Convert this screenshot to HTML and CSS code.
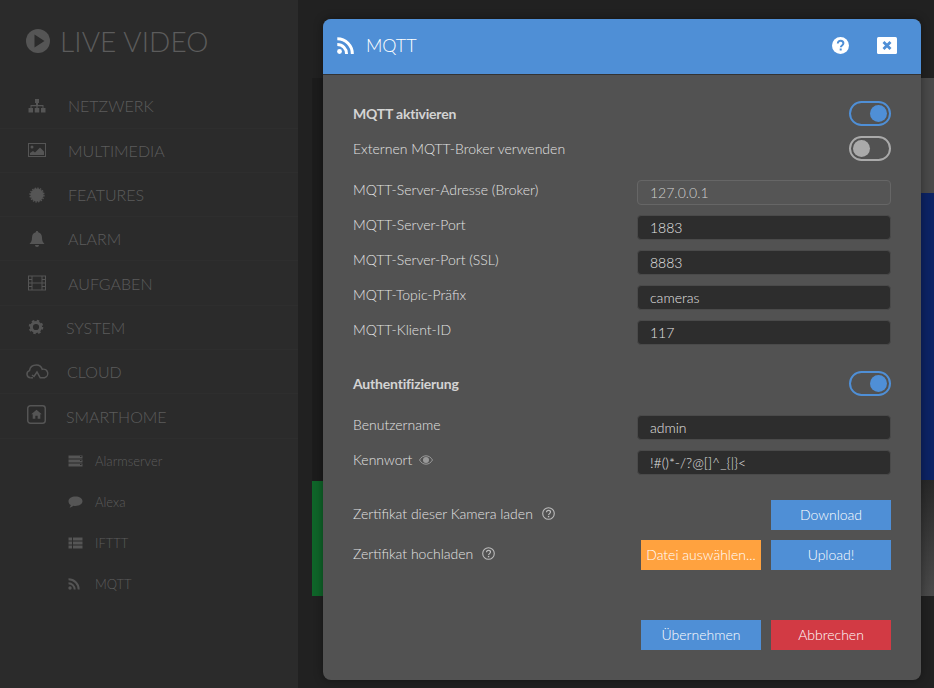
FILE: index.html
```html
<!DOCTYPE html>
<html lang="de">
<head>
    <meta charset="UTF-8">
    <meta name="viewport" content="width=device-width, initial-scale=1.0">
    <title>MQTT</title>
    <link rel="stylesheet" href="styles.css">
</head>
<body>
    <div class="page">
        <aside class="sidebar">
            <div class="brand">
                <svg class="brand-icon" viewBox="0 0 24 24"><circle cx="12" cy="12" r="12" fill="#555"/><path d="M8.500 5.500 L18.500 12 L8.500 18.500 Z" fill="#2b2b2b"/></svg>
                <span>LIVE VIDEO</span>
            </div>
            <nav class="nav">
                <a class="nav-item wide">
                    <svg class="nav-icon" viewBox="0 0 18 18"><path d="M7 2h4v4H10v2h5.500v3H14.500V9.200H9.600V11H8.400V9.200H3.500V11H2.500V8H8V6H7z M0.500 11h4.500v4.500H0.500z M6.750 11h4.500v4.500h-4.500z M13 11h4.500v4.500H13z" fill="#555"/></svg>
                    NETZWERK
                </a>
                <a class="nav-item wide">
                    <svg class="nav-icon" viewBox="0 0 18 18"><rect x="0.500" y="2.500" width="17" height="13" fill="none" stroke="#555"/><circle cx="4" cy="6" r="1.500" fill="#555"/><path d="M2 14v-2l3-2 2 1.500 5-5 4 4v3.500z" fill="#555"/></svg>
                    MULTIMEDIA
                </a>
                <a class="nav-item wide">
                    <svg class="nav-icon" viewBox="0 0 18 18"><circle cx="9" cy="9" r="6.500" fill="#555"/><circle cx="9" cy="9" r="6.900" fill="none" stroke="#555" stroke-width="1.400" stroke-dasharray="1.600 1.110"/></svg>
                    FEATURES
                </a>
                <a class="nav-item wide">
                    <svg class="nav-icon" viewBox="0 0 18 18"><path d="M9 1c.8 0 1.200.5 1.200 1.200C12.600 2.800 14 4.800 14 7.500c0 3.500 1 5 2.500 6.500h-15C3 12.500 4 11 4 7.500c0-2.700 1.400-4.700 3.800-5.300C7.800 1.500 8.200 1 9 1z M7 15h4a2 2 0 0 1-4 0z" fill="#555"/></svg>
                    ALARM
                </a>
                <a class="nav-item wide">
                    <svg class="nav-icon" viewBox="0 0 18 18"><rect x="0.500" y="2" width="17" height="14" fill="none" stroke="#555"/><path d="M4 2v14M14 2v14M0.500 5.500H4M0.500 9H4M0.500 12.500H4M14 5.500h3.500M14 9h3.500M14 12.500h3.500M4 9h10" fill="none" stroke="#555"/></svg>
                    AUFGABEN
                </a>
                <a class="nav-item">
                    <svg class="nav-icon" viewBox="0 0 18 18"><circle cx="8" cy="9" r="4.600" fill="none" stroke="#555" stroke-width="3"/><circle cx="8" cy="9" r="6.300" fill="none" stroke="#555" stroke-width="2" stroke-dasharray="2.500 2.450"/></svg>
                    SYSTEM
                </a>
                <a class="nav-item">
                    <svg class="nav-icon cloud-icon" viewBox="0 0 24 15"><path d="M5.500 13.800a3.700 3.700 0 0 1-1-7.200C5 3 8 0.900 11.500 0.900c2.800 0 5 1.800 5.700 4.400a4.300 4.300 0 0 1 2.300 8.500h-4.300L12 8l-3 4.500-2-1.500" fill="none" stroke="#555" stroke-width="1.500"/><path d="M5.500 13.800h2.500" stroke="#555" stroke-width="1.500"/></svg>
                    CLOUD
                </a>
                <a class="nav-item">
                    <svg class="nav-icon home-icon" viewBox="0 0 18 18"><rect x="0.700" y="0.700" width="16.600" height="16.600" rx="2.500" fill="none" stroke="#555" stroke-width="1.400"/><path d="M9 4.500l5 4.300h-1.400V13h-2.500v-2.800H7.900V13H5.400V8.800H4z" fill="#555"/></svg>
                    SMARTHOME
                </a>
                <a class="nav-sub">
                    <svg class="sub-icon" viewBox="0 0 15 12"><path d="M0.500 0.500h14v3h-14z M0.500 4.500h14v3h-14z M0.500 8.500h14v3h-14z" fill="#555"/><path d="M12 1.500h1.500M12 5.500h1.500M12 9.500h1.500" stroke="#2b2b2b"/></svg>
                    Alarmserver
                </a>
                <a class="nav-sub">
                    <svg class="sub-icon" viewBox="0 0 15 12"><path d="M7.500 0.500c3.900 0 7 2 7 4.700s-3.100 4.700-7 4.700c-.8 0-1.500-.1-2.200-.2C4.200 10.700 2.800 11.400 1.500 11.600c.7-.7 1.200-1.500 1.300-2.500C1.300 8.200 0.500 6.800 0.500 5.200 0.500 2.500 3.600 0.500 7.500 0.500z" fill="#555"/></svg>
                    Alexa
                </a>
                <a class="nav-sub">
                    <svg class="sub-icon" viewBox="0 0 15 12"><path d="M0.500 0.500h3.500v3h-3.500z M5 0.500h9.500v3H5z M0.500 4.500h3.500v3h-3.500z M5 4.500h9.500v3H5z M0.500 8.500h3.500v3h-3.500z M5 8.500h9.500v3H5z" fill="#555"/></svg>
                    IFTTT
                </a>
                <a class="nav-sub">
                    <svg class="sub-icon" viewBox="0 0 15 12"><circle cx="2" cy="10" r="1.700" fill="#555"/><path d="M0.500 5.300a6.200 6.200 0 0 1 6.200 6.200M0.500 1.300a10.200 10.200 0 0 1 10.200 10.200" fill="none" stroke="#555" stroke-width="2"/></svg>
                    MQTT
                </a>
            </nav>
        </aside>

        <main class="main">
            <div class="tile-col tile-col-left">
                <div class="tile tile-dark"></div>
                <div class="tile tile-green"></div>
            </div>
            <div class="tile-col tile-col-right">
                <div class="tile tile-grey"></div>
                <div class="tile tile-blue"></div>
                <div class="tile tile-photo"></div>
            </div>
        </main>

        <section class="modal">
            <header class="modal-header">
                <svg class="modal-rss" viewBox="0 0 17 17"><circle cx="2.500" cy="14.500" r="2.400" fill="#fff"/><path d="M0.300 7.500a9.200 9.200 0 0 1 9.200 9.500M0.300 1.700a15 15 0 0 1 15 15.300" fill="none" stroke="#fff" stroke-width="3"/></svg>
                <h2 class="modal-title">MQTT</h2>
                <svg class="head-help" viewBox="0 0 17 17"><circle cx="8.500" cy="8.500" r="8.500" fill="#fff"/><path d="M5.800 6.500c0-1.700 1.200-2.700 2.800-2.700s2.800 1 2.800 2.500c0 2.200-2.600 2.100-2.600 4" fill="none" stroke="#4f8fd6" stroke-width="2"/><rect x="7.700" y="11.500" width="2" height="2" fill="#4f8fd6"/></svg>
                <svg class="head-close" viewBox="0 0 20 17"><rect width="20" height="17" rx="1.500" fill="#fff"/><path d="M6.500 5l7 7M13.500 5l-7 7" stroke="#4f8fd6" stroke-width="2.800"/></svg>
            </header>

            <div class="modal-body">
                <div class="toggle-row">
                    <span class="heading">MQTT aktivieren</span>
                    <span class="toggle on"></span>
                </div>
                <div class="toggle-row">
                    <span class="label">Externen MQTT-Broker verwenden</span>
                    <span class="toggle"></span>
                </div>

                <div class="field-group">
                    <div class="field">
                        <label class="label">MQTT-Server-Adresse (Broker)</label>
                        <input class="input input-disabled" type="text" value="127.0.0.1" readonly>
                    </div>
                    <div class="field">
                        <label class="label">MQTT-Server-Port</label>
                        <input class="input" type="text" value="1883">
                    </div>
                    <div class="field">
                        <label class="label">MQTT-Server-Port (SSL)</label>
                        <input class="input" type="text" value="8883">
                    </div>
                    <div class="field">
                        <label class="label">MQTT-Topic-Präfix</label>
                        <input class="input" type="text" value="cameras">
                    </div>
                    <div class="field">
                        <label class="label">MQTT-Klient-ID</label>
                        <input class="input" type="text" value="117">
                    </div>
                </div>

                <div class="toggle-row auth-row">
                    <span class="heading">Authentifizierung</span>
                    <span class="toggle on"></span>
                </div>

                <div class="field-group">
                    <div class="field">
                        <label class="label">Benutzername</label>
                        <input class="input" type="text" value="admin">
                    </div>
                    <div class="field">
                        <label class="label">Kennwort
                            <svg class="eye" viewBox="0 0 14 10"><path d="M0.500 5C2 2.300 4.300 0.800 7 0.800S12 2.300 13.500 5C12 7.700 9.700 9.200 7 9.200S2 7.700 0.500 5z" fill="none" stroke="#999"/><circle cx="7" cy="5" r="3" fill="#999"/></svg>
                        </label>
                        <input class="input" type="text" value="!#()*-/?@[]^_{|}&lt;">
                    </div>
                </div>

                <div class="cert-row">
                    <span class="label">Zertifikat dieser Kamera laden
                        <svg class="hint" viewBox="0 0 13 13"><circle cx="6.500" cy="6.500" r="5.800" fill="none" stroke="#bbb" stroke-width="1.100"/><path d="M4.500 5.200c0-1.200.9-1.900 2-1.900s2 .7 2 1.800c0 1.500-1.900 1.500-1.900 2.900" fill="none" stroke="#bbb" stroke-width="1.200"/><rect x="5.900" y="8.900" width="1.400" height="1.400" fill="#bbb"/></svg>
                    </span>
                    <button class="btn btn-blue" type="button">Download</button>
                </div>
                <div class="cert-row">
                    <span class="label">Zertifikat hochladen
                        <svg class="hint" viewBox="0 0 13 13"><circle cx="6.500" cy="6.500" r="5.800" fill="none" stroke="#bbb" stroke-width="1.100"/><path d="M4.500 5.200c0-1.200.9-1.900 2-1.900s2 .7 2 1.800c0 1.500-1.900 1.500-1.900 2.900" fill="none" stroke="#bbb" stroke-width="1.200"/><rect x="5.900" y="8.900" width="1.400" height="1.400" fill="#bbb"/></svg>
                    </span>
                    <div class="btn-pair">
                        <button class="btn btn-orange" type="button">Datei auswählen...</button>
                        <button class="btn btn-blue" type="button">Upload!</button>
                    </div>
                </div>

                <div class="modal-footer">
                    <button class="btn btn-blue" type="button">Übernehmen</button>
                    <button class="btn btn-red" type="button">Abbrechen</button>
                </div>
            </div>
        </section>
    </div>
</body>
</html>
```

FILE: styles.css
```css
* {
    box-sizing: border-box;
}
html, body {
    margin: 0;
    height: 100%;
    overflow: hidden;
}
body {
    font-family: Lato, "Open Sans", sans-serif;
    background-color: #212121;
    color: #ccc;
}
.page {
    position: relative;
    display: flex;
    height: 688px;
    overflow: hidden;
}

/* sidebar */
.sidebar {
    width: 298px;
    flex-shrink: 0;
    background-color: #2b2b2b;
}
.brand {
    display: flex;
    align-items: center;
    height: 84.3px;
    padding: 0 0 2px 26px;
    font-size: 28px;
    font-weight: 300;
    letter-spacing: 0.1px;
    color: #5c5c5c;
}
.brand-icon {
    width: 24px;
    height: 24px;
    margin-right: 10px;
}
.nav-item {
    display: flex;
    align-items: center;
    height: 44.3px;
    padding-left: 28px;
    font-size: 16px;
    font-weight: 300;
    color: #5c5c5c;
    border-bottom: 1px solid #2e2e2e;
}
.nav-icon {
    width: 18px;
    height: 18px;
    margin-right: 20px;
}
.nav-item.wide .nav-icon {
    margin-right: 22px;
}
.cloud-icon {
    width: 24px;
    height: 15px;
    margin-left: -3px;
    margin-right: 18px;
}
.home-icon {
    width: 19px;
    height: 19px;
    margin-left: -1px;
    margin-bottom: 3px;
}
.nav-item + .nav-sub {
    margin-top: 2px;
}
.nav-sub {
    display: flex;
    align-items: center;
    height: 41px;
    padding-left: 68px;
    font-size: 13px;
    font-weight: 300;
    color: #5c5c5c;
}
.sub-icon {
    width: 15px;
    height: 12px;
    margin-right: 12px;
}

/* video tiles behind the dialog */
.main {
    flex: 1;
    display: flex;
    gap: 20px;
    padding: 78px 0 0 14px;
    overflow: hidden;
}
.tile-col {
    flex-shrink: 0;
    display: flex;
    flex-direction: column;
}
.tile-col-left {
    width: 290px;
}
.tile-col-right {
    width: 330px;
}
.tile-dark {
    height: 403px;
    background-color: #1c1c1c;
}
.tile-green {
    height: 115px;
    background-color: #0f6529;
}
.tile-grey {
    height: 115px;
    background-color: #494949;
}
.tile-blue {
    height: 287px;
    background-color: #0c2364;
}
.tile-photo {
    height: 116px;
    background: linear-gradient(#282828, #4a4a4a);
}

/* dialog */
.modal {
    position: absolute;
    top: 19px;
    left: 323px;
    width: 598px;
    background-color: #525252;
    border-radius: 8px;
    box-shadow: 0 0 10px rgba(0, 0, 0, 0.4);
    overflow: hidden;
}
.modal-header {
    display: flex;
    align-items: center;
    height: 56px;
    padding: 0 24px 3px 14px;
    background-color: #4f8fd6;
    border-bottom: 1px solid #333;
}
.modal-rss {
    width: 17px;
    height: 17px;
    margin-right: 12px;
}
.modal-title {
    flex: 1;
    margin: 0;
    font-size: 18px;
    font-weight: 300;
    color: #fff;
}
.head-help {
    width: 17px;
    height: 17px;
    margin-right: 28px;
}
.head-close {
    width: 20px;
    height: 17px;
}
.modal-body {
    padding: 21px 30px 30px;
}
.toggle-row {
    display: flex;
    align-items: center;
    justify-content: space-between;
    height: 35px;
}
.auth-row {
    margin-top: 11px;
}
.heading {
    font-size: 14px;
    font-weight: 700;
    color: #d4d4d4;
    letter-spacing: -0.2px;
}
.label {
    font-size: 14px;
    font-weight: 300;
    color: #e2e2e2;
}
.toggle {
    position: relative;
    width: 42px;
    height: 25px;
    border: 2px solid #aaa;
    border-radius: 13px;
}
.toggle::after {
    content: "";
    position: absolute;
    top: 2px;
    left: 2px;
    width: 17px;
    height: 17px;
    border-radius: 50%;
    background-color: #aaa;
}
.toggle.on {
    border-color: #4f8fd6;
}
.toggle.on::after {
    left: auto;
    right: 2px;
    background-color: #4f8fd6;
}
.field-group {
    margin-top: 14px;
}
.field {
    display: flex;
    justify-content: space-between;
    height: 35px;
}
.field .label {
    padding-top: 1px;
}
.input {
    width: 254px;
    height: 25px;
    padding: 0 12px;
    font-family: inherit;
    font-size: 14px;
    font-weight: 300;
    color: #e2e2e2;
    background-color: #2d2d2d;
    border: 1px solid #4a4a4a;
    border-radius: 4px;
    outline: none;
}
.input-disabled {
    background-color: #555;
    border-color: #666;
    color: #d0d0d0;
}
.eye {
    width: 14px;
    height: 10px;
    margin-left: 3px;
}
.hint {
    width: 13px;
    height: 13px;
    margin-left: 5px;
    vertical-align: -1px;
}
.cert-row {
    display: flex;
    align-items: center;
    justify-content: space-between;
    margin-bottom: 10px;
}
.cert-row .label {
    padding-bottom: 4px;
}
.field-group + .cert-row {
    margin-top: 15px;
}
.btn-pair, .modal-footer {
    display: flex;
    gap: 10px;
}
.modal-footer {
    justify-content: flex-end;
    margin-top: 50px;
}
.btn {
    width: 120px;
    height: 30px;
    padding: 0 0 2px;
    font-family: inherit;
    font-size: 14px;
    font-weight: 300;
    color: #fff;
    border: none;
}
.btn-blue {
    background-color: #4f8fd6;
}
.btn-orange {
    background-color: #ffa23f;
}
.btn-red {
    background-color: #d23a44;
}
```
